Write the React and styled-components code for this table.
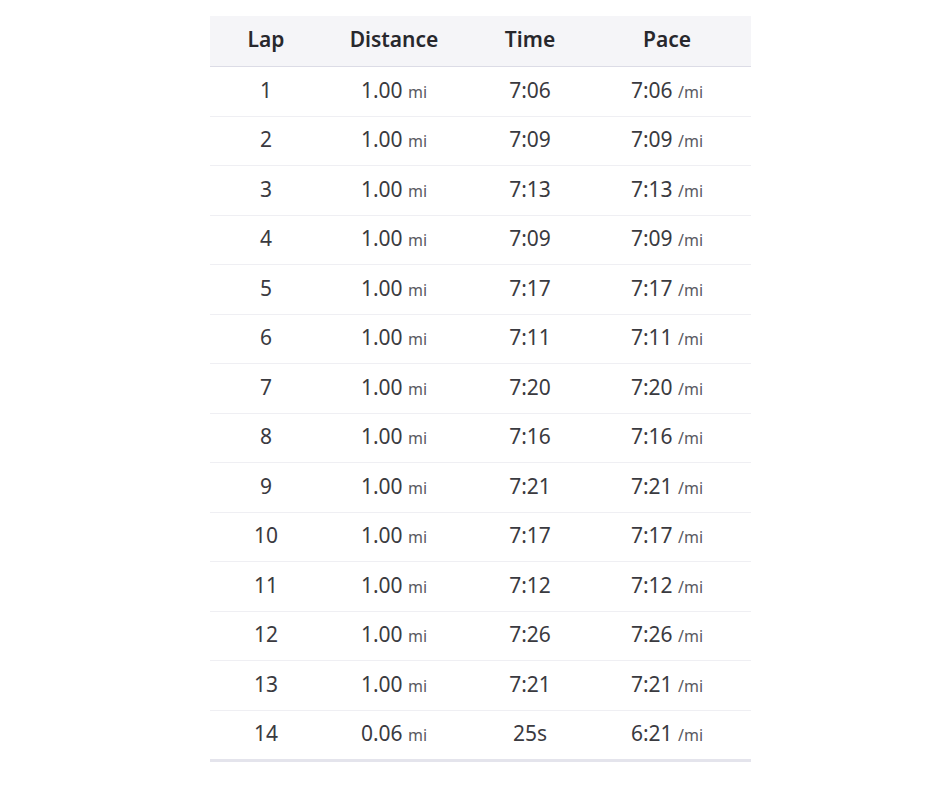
import styled, { createGlobalStyle } from "styled-components";

const GlobalStyle = createGlobalStyle`
  body {
    margin: 0;
    background: #ffffff;
    font-family: "Noto Sans", "Open Sans", sans-serif;
  }
`;

const laps = [
  ["1", "1.00", "7:06", "7:06"],
  ["2", "1.00", "7:09", "7:09"],
  ["3", "1.00", "7:13", "7:13"],
  ["4", "1.00", "7:09", "7:09"],
  ["5", "1.00", "7:17", "7:17"],
  ["6", "1.00", "7:11", "7:11"],
  ["7", "1.00", "7:20", "7:20"],
  ["8", "1.00", "7:16", "7:16"],
  ["9", "1.00", "7:21", "7:21"],
  ["10", "1.00", "7:17", "7:17"],
  ["11", "1.00", "7:12", "7:12"],
  ["12", "1.00", "7:26", "7:26"],
  ["13", "1.00", "7:21", "7:21"],
  ["14", "0.06", "25s", "6:21"],
];

const Page = styled.div`
  padding: 16px 0 0 210px;
`;

const Table = styled.table`
  width: 541px;
  table-layout: fixed;
  border-collapse: collapse;
  border-bottom: 3px solid #e4e4ec;
  line-height: 1.2;
`;

const HeadRow = styled.tr`
  background: #f5f5f8;
  border-bottom: 1px solid #dcdce6;
`;

const Th = styled.th`
  height: 48px;
  padding: 0 ${(p) => p.$pr || 0}px 2px 0;
  width: ${(p) => p.$w}px;
  font-size: 21px;
  font-weight: 600;
  color: #28282d;
  text-align: center;
`;

const Row = styled.tr`
  border-top: 1px solid #efeff3;
  &:first-child {
    border-top: none;
  }
`;

const Td = styled.td`
  height: 46.5px;
  padding: 0 ${(p) => p.$pr || 0}px 2px 0;
  text-align: center;
  font-size: 21px;
  color: #3a3a3f;
`;

const Unit = styled.abbr`
  font-size: 16px;
  color: #5a5a62;
  text-decoration: none;
`;

export default function App() {
  return (
    <>
      <GlobalStyle />
      <Page>
        <Table>
          <thead>
            <HeadRow>
              <Th $w={112}>Lap</Th>
              <Th $w={144}>Distance</Th>
              <Th $w={128}>Time</Th>
              <Th $w={146} $pr={11}>Pace</Th>
            </HeadRow>
          </thead>
          <tbody>
            {laps.map(([lap, dist, time, pace]) => (
              <Row key={lap}>
                <Td>{lap}</Td>
                <Td>
                  {dist} <Unit>mi</Unit>
                </Td>
                <Td>{time}</Td>
                <Td $pr={11}>
                  {pace} <Unit>/mi</Unit>
                </Td>
              </Row>
            ))}
          </tbody>
        </Table>
      </Page>
    </>
  );
}
